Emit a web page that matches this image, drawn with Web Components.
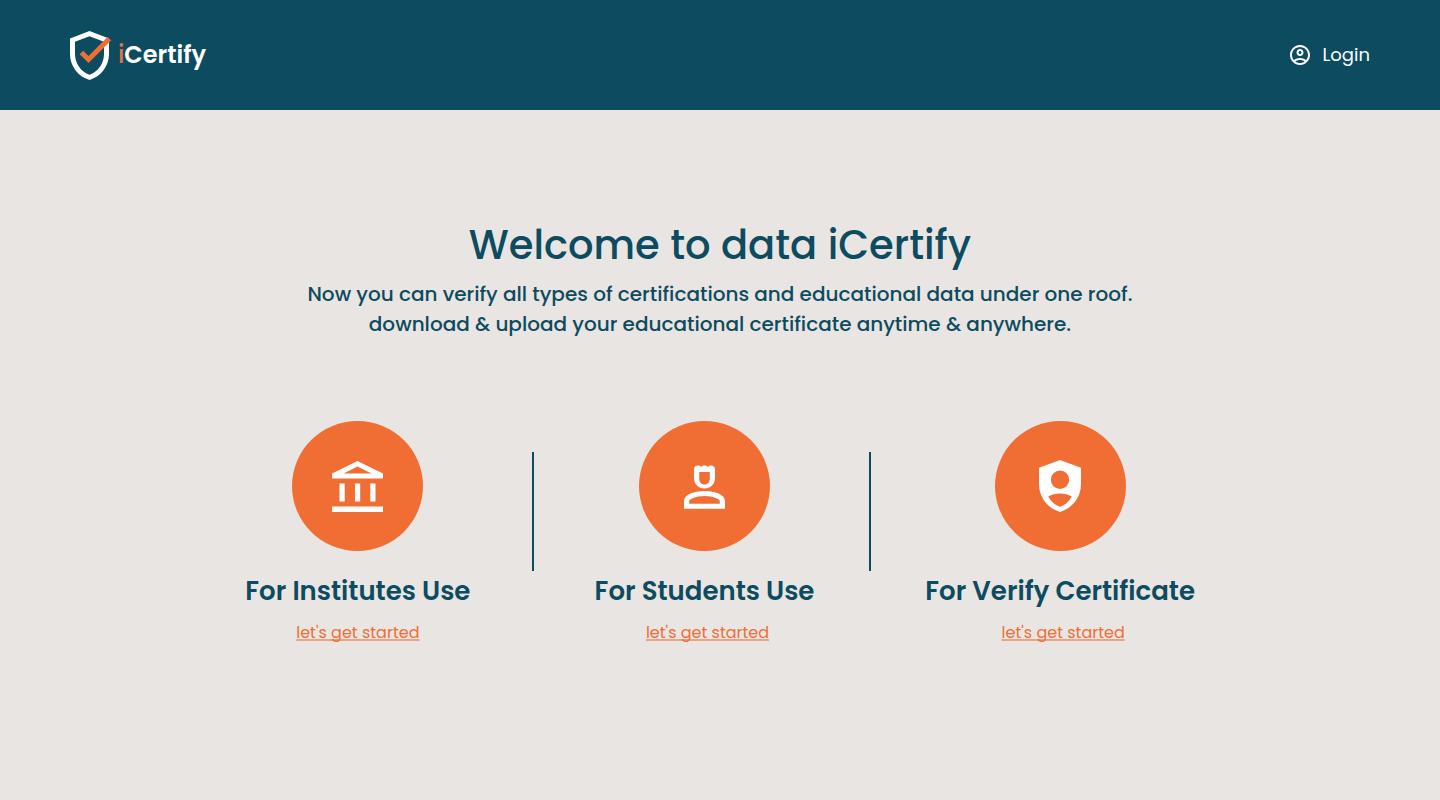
<!DOCTYPE html>
<html lang="en">
<head>
<meta charset="utf-8">
<title>iCertify</title>
<style>
  :root {
    --navy: #0c4b60;
    --orange: #f06e34;
    --paper: #e9e5e2;
  }
  body {
    margin: 0;
    min-height: 100vh;
    background: var(--paper);
    color: var(--navy);
    font-family: Poppins, Inter, "Open Sans", sans-serif;
  }
</style>
</head>
<body>
<ic-page></ic-page>

<script>
const define = (name, html) => {
  const template = document.createElement('template');
  template.innerHTML = html;
  customElements.define(name, class extends HTMLElement {
    constructor() {
      super();
      this.attachShadow({ mode: 'open' }).append(template.content.cloneNode(true));
    }
  });
};

define('ic-logo', `
  <style>
    :host { display: block; }
    a { display: flex; align-items: center; gap: 6px; color: #fff; text-decoration: none;
        font-size: 24px; line-height: 36px; font-weight: 600; }
    svg { display: block; }
    .i { color: var(--orange); font-weight: 500; }
  </style>
  <a href="#">
    <svg width="42" height="50" viewBox="0 -1 42 50" aria-hidden="true">
      <path fill="#fff" fill-rule="evenodd" d="M19.5 0 39 7.5V23C39 35 31 45.500 19.500 49 8 45.500 0 35 0 23V7.500ZM19.500 5.300 5 10.800V23c0 9.500 6 17.800 14.500 20.800C28 40.800 34 32.500 34 23V10.800Z"/>
      <path fill="none" stroke="#f06e34" stroke-width="5" d="m11.500 21.500 7 7L39.300 7.700"/>
    </svg>
    <span><span class="i">i</span>Certify</span>
  </a>`);

define('ic-header', `
  <style>
    :host { display: block; background: var(--navy); }
    header { display: flex; align-items: center; justify-content: space-between;
             box-sizing: border-box; min-height: 110px; padding: 0 70px; }
    .login { display: flex; align-items: center; gap: 11px; color: #fff; text-decoration: none;
             font-size: 18px; line-height: 28px; }
    svg { display: block; }
  </style>
  <header>
    <ic-logo></ic-logo>
    <a class="login" href="#login">
      <svg width="24" height="24" viewBox="0 0 24 24" fill="#fff" aria-hidden="true">
        <path d="M12 2C6.480 2 2 6.480 2 12s4.480 10 10 10 10-4.480 10-10S17.520 2 12 2zM7.350 18.500C8.660 17.560 10.260 17 12 17s3.340.56 4.650 1.500C15.340 19.440 13.740 20 12 20s-3.340-.56-4.650-1.500zm10.790-1.380C16.450 15.800 14.320 15 12 15s-4.450.8-6.140 2.120C4.700 15.730 4 13.950 4 12c0-4.420 3.580-8 8-8s8 3.580 8 8c0 1.950-.7 3.730-1.860 5.120z"/>
        <path d="M12 6c-1.930 0-3.500 1.570-3.500 3.500S10.070 13 12 13s3.500-1.570 3.500-3.500S13.930 6 12 6zm0 5c-.83 0-1.500-.67-1.500-1.500S11.170 8 12 8s1.500.67 1.500 1.500S12.830 11 12 11z"/>
      </svg>
      <span>Login</span>
    </a>
  </header>`);

define('ic-hero', `
  <style>
    :host { display: block; text-align: center; }
    h1 { margin: 0 0 4px; font-size: 40px; line-height: 60px; font-weight: 500; }
    p { margin: 0; font-size: 20px; line-height: 30px; font-weight: 500; }
  </style>
  <h1>Welcome to data iCertify</h1>
  <p>Now you can verify all types of certifications and educational data under one roof.<br>download &amp; upload your educational certificate anytime &amp; anywhere.</p>`);

define('ic-option', `
  <style>
    :host { display: flex; flex-direction: column; align-items: center; text-align: center; }
    .disc { display: flex; align-items: center; justify-content: center;
            width: 131px; height: 130px; border-radius: 50%; background: var(--orange); }
    h2 { margin: 20px 0 10px; font-size: 26px; line-height: 40px; font-weight: 600; white-space: nowrap; }
    .action { padding-left: var(--action-indent, 0); line-height: 24px; }
    a { color: var(--orange); font-size: 16px;
        text-decoration: underline 2px rgb(240 110 52 / .55); text-underline-offset: 1px;
        text-decoration-skip-ink: none; }
  </style>
  <div class="disc"><slot name="icon"></slot></div>
  <h2><slot></slot></h2>
  <div class="action"><a href="#start">let's get started</a></div>`);

define('ic-divider', `
  <style>
    :host { display: block; justify-self: center; width: 2px; height: 119px; margin-top: 31px; background: var(--navy); }
  </style>`);

define('ic-page', `
  <style>
    :host { display: block; }
    main { padding: 105px 24px 64px; }
    .options { display: grid; grid-template-columns: 226fr 124fr 219fr 111fr 270fr;
               align-items: start; max-width: 950px; margin: 82px auto 0; }
    ic-divider + ic-option { --action-indent: 6px; }
    svg { display: block; }
  </style>
  <ic-header></ic-header>
  <main>
    <ic-hero></ic-hero>
    <section class="options">
      <ic-option>
        <svg slot="icon" width="51" height="51" viewBox="0 0 51 51" fill="#fff" aria-hidden="true">
          <path fill-rule="evenodd" d="M25.500 0 51 12.500v5H0v-5ZM11.500 12.600h28L25.500 5.600Z"/>
          <path d="M7.500 22.500h5.200v18H7.500zM23 22.500h5.200v18H23zM38.300 22.500h5.200v18h-5.200zM0 45.500h51V51H0z"/>
        </svg>
        For Institutes Use
      </ic-option>
      <ic-divider></ic-divider>
      <ic-option>
        <svg slot="icon" width="41" height="46" viewBox="0 -2 41 46" fill="#fff" fill-rule="evenodd" aria-hidden="true">
          <path d="M10 4.500C10 2 11.700.6 14 .6c1.300 0 2.200.4 3.200 1.300C18.200.9 19.200.5 20.500.5s2.300.4 3.300 1.400C24.800 1 25.700.6 27 .6c2.300 0 4 1.400 4 3.900v8.500c0 6-4.500 10.500-10.500 10.500S10 19 10 13ZM15.200 7v6.500c0 3.700 2 6 5.300 6s5.300-2.300 5.300-6V7Z"/>
          <path d="M0 43.700V36C0 29.500 10 26 20.500 26S41 29.500 41 36v7.700ZM5.200 38.700h30.600V36c0-1.500-6-4.900-15.300-4.900S5.200 34.500 5.200 36Z"/>
        </svg>
        For Students Use
      </ic-option>
      <ic-divider></ic-divider>
      <ic-option>
        <svg slot="icon" width="42" height="52" viewBox="0 0 42 52" fill="#fff" fill-rule="evenodd" aria-hidden="true">
          <path d="M21 0 42 7.800V24c0 13.500-8.500 24-21 28C8.500 48 0 37.500 0 24V7.800ZM21 10.500a9.200 9.200 0 1 0 0 18.400 9.200 9.200 0 1 0 0-18.400ZM9.200 36.500C12 41.500 16 45.300 21 46.800c5-1.500 9-5.300 11.800-10.300C29.500 34.500 25.500 33.500 21 33.500s-8.500 1-11.800 3Z"/>
        </svg>
        For Verify Certificate
      </ic-option>
    </section>
  </main>`);
</script>
</body>
</html>
